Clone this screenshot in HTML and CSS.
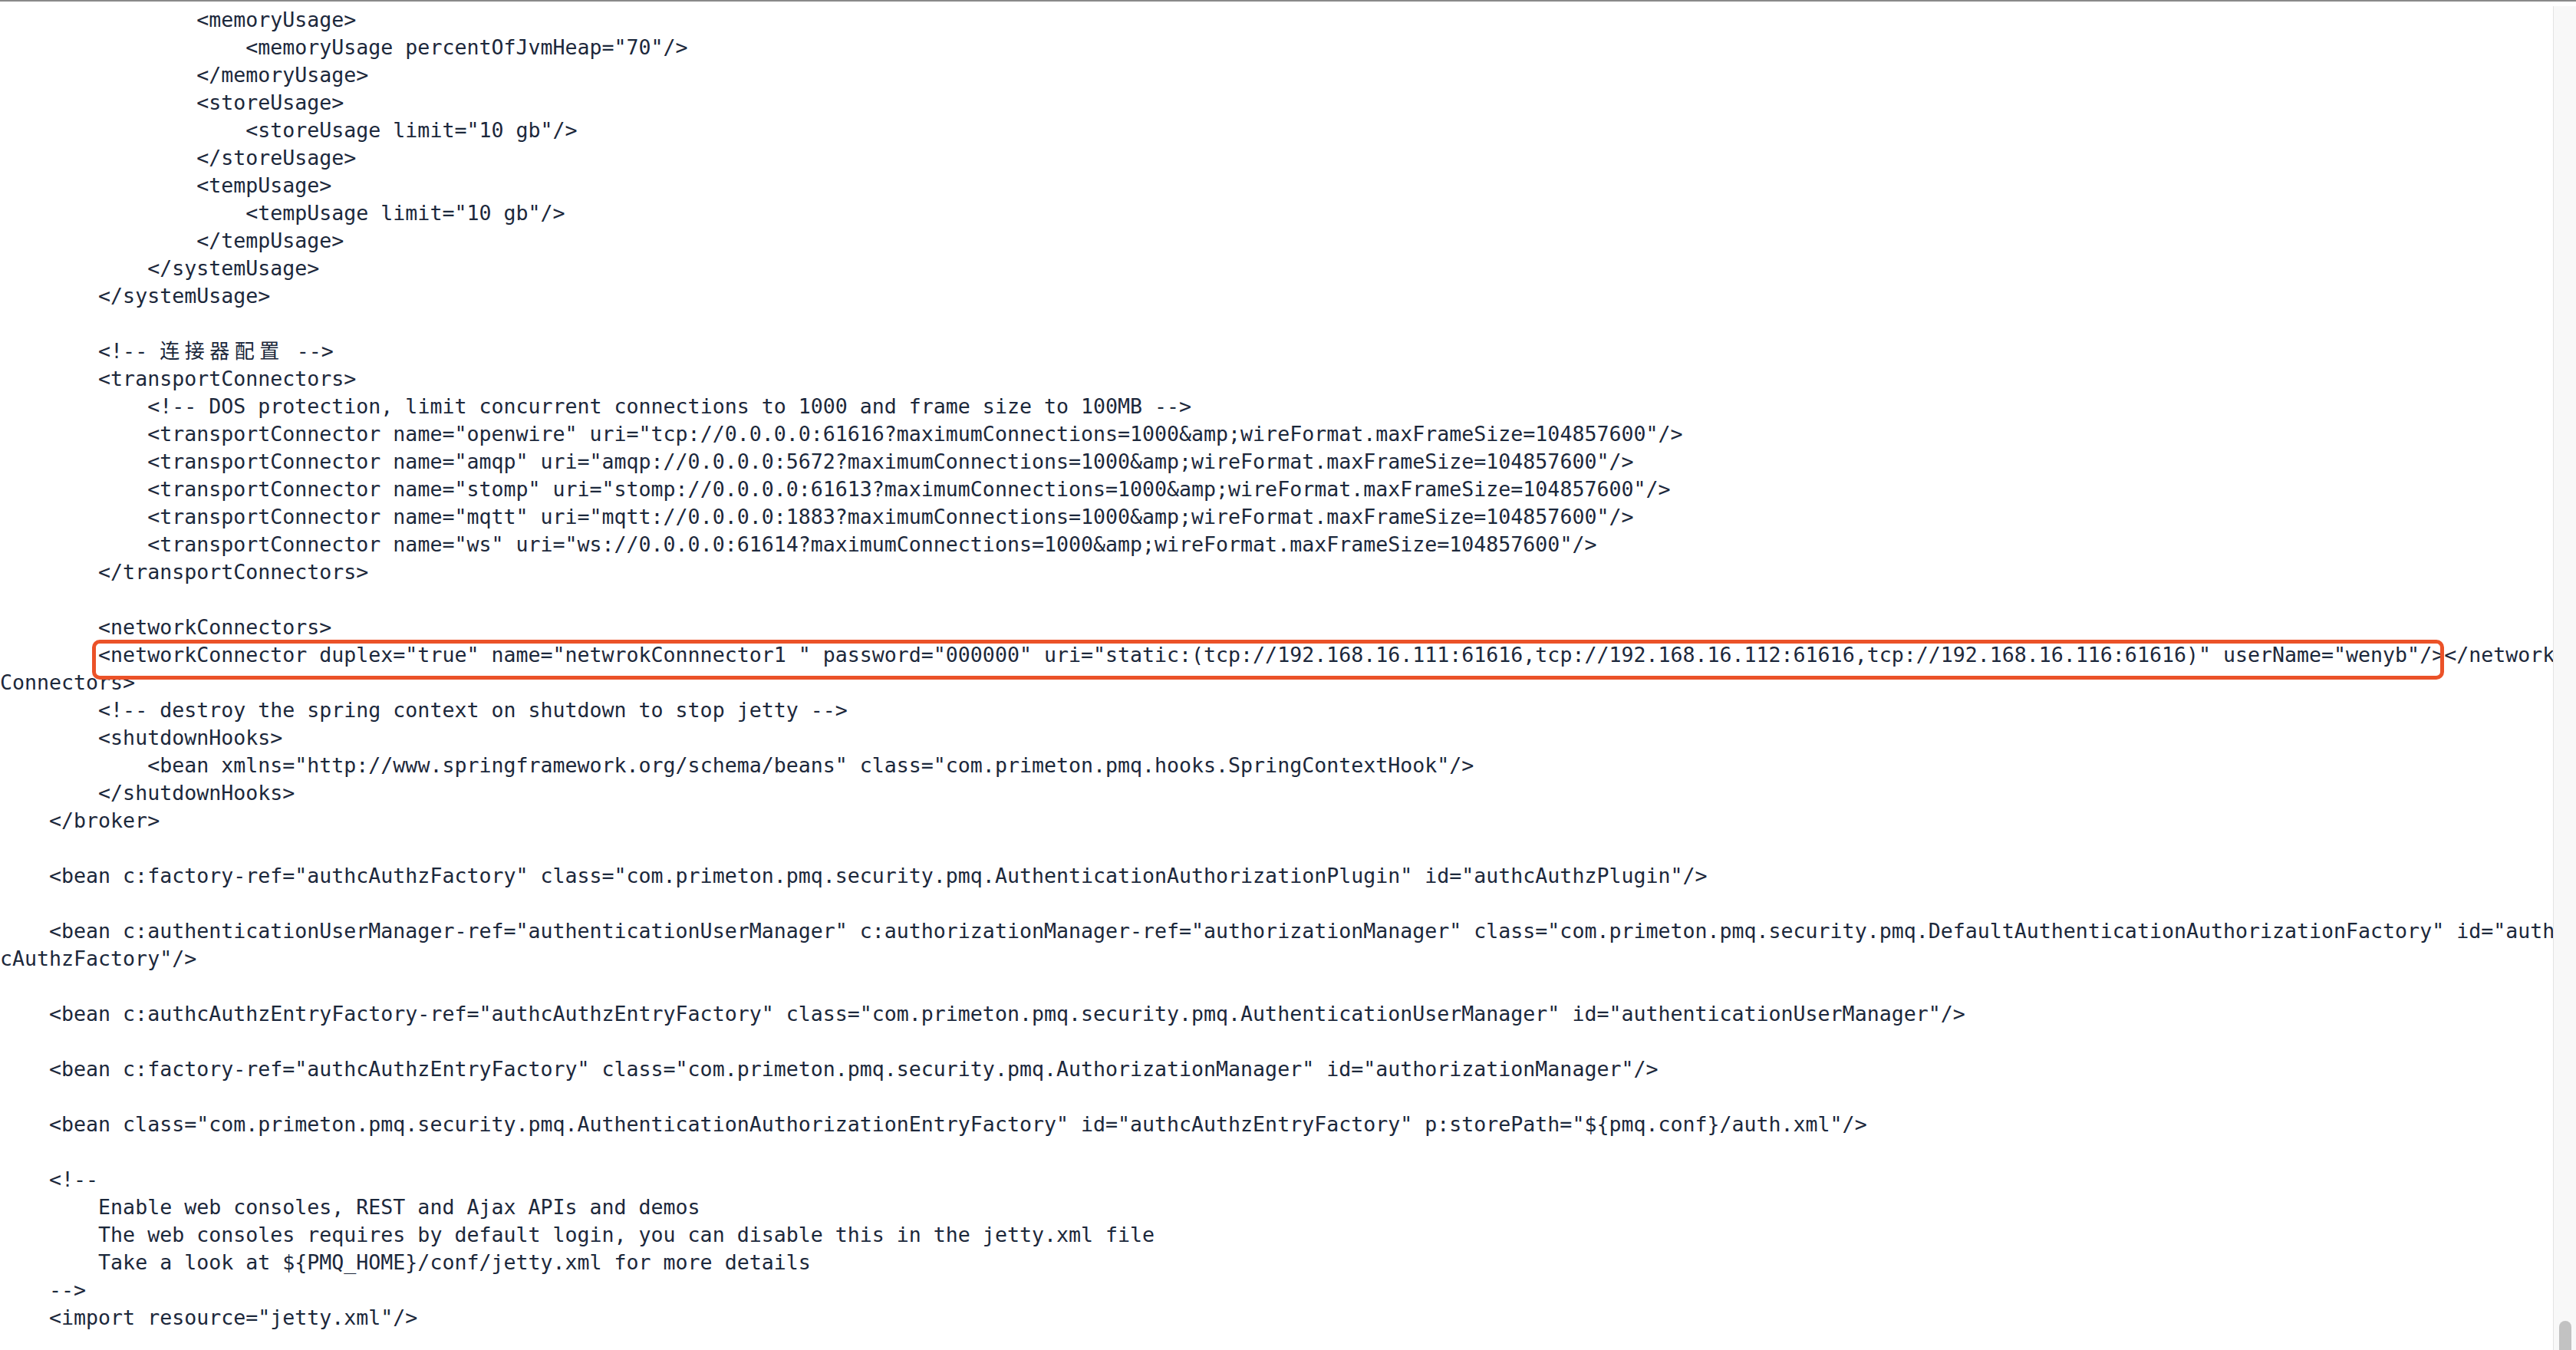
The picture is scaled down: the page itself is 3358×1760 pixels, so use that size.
FILE: index.html
```html
<!DOCTYPE html>
<html lang="zh-CN">
<head>
  <meta charset="UTF-8">
  <meta name="viewport" content="width=device-width, initial-scale=1.0">
  <title>pmq.xml</title>
  <link rel="stylesheet" href="styles.css">
</head>
<body>

  <div class="window">
    <div class="editor">
<pre class="code">                &lt;memoryUsage&gt;
                    &lt;memoryUsage percentOfJvmHeap="70"/&gt;
                &lt;/memoryUsage&gt;
                &lt;storeUsage&gt;
                    &lt;storeUsage limit="10 gb"/&gt;
                &lt;/storeUsage&gt;
                &lt;tempUsage&gt;
                    &lt;tempUsage limit="10 gb"/&gt;
                &lt;/tempUsage&gt;
            &lt;/systemUsage&gt;
        &lt;/systemUsage&gt;

        &lt;!-- <span class="cjk">连接器配置</span> --&gt;
        &lt;transportConnectors&gt;
            &lt;!-- DOS protection, limit concurrent connections to 1000 and frame size to 100MB --&gt;
            &lt;transportConnector name="openwire" uri="tcp://0.0.0.0:61616?maximumConnections=1000&amp;amp;wireFormat.maxFrameSize=104857600"/&gt;
            &lt;transportConnector name="amqp" uri="amqp://0.0.0.0:5672?maximumConnections=1000&amp;amp;wireFormat.maxFrameSize=104857600"/&gt;
            &lt;transportConnector name="stomp" uri="stomp://0.0.0.0:61613?maximumConnections=1000&amp;amp;wireFormat.maxFrameSize=104857600"/&gt;
            &lt;transportConnector name="mqtt" uri="mqtt://0.0.0.0:1883?maximumConnections=1000&amp;amp;wireFormat.maxFrameSize=104857600"/&gt;
            &lt;transportConnector name="ws" uri="ws://0.0.0.0:61614?maximumConnections=1000&amp;amp;wireFormat.maxFrameSize=104857600"/&gt;
        &lt;/transportConnectors&gt;

        &lt;networkConnectors&gt;
        &lt;networkConnector duplex="true" name="netwrokConnnector1 " password="000000" uri="static:(tcp://192.168.16.111:61616,tcp://192.168.16.112:61616,tcp://192.168.16.116:61616)" userName="wenyb"/&gt;&lt;/networkConnectors&gt;
        &lt;!-- destroy the spring context on shutdown to stop jetty --&gt;
        &lt;shutdownHooks&gt;
            &lt;bean xmlns="http://www.springframework.org/schema/beans" class="com.primeton.pmq.hooks.SpringContextHook"/&gt;
        &lt;/shutdownHooks&gt;
    &lt;/broker&gt;

    &lt;bean c:factory-ref="authcAuthzFactory" class="com.primeton.pmq.security.pmq.AuthenticationAuthorizationPlugin" id="authcAuthzPlugin"/&gt;

    &lt;bean c:authenticationUserManager-ref="authenticationUserManager" c:authorizationManager-ref="authorizationManager" class="com.primeton.pmq.security.pmq.DefaultAuthenticationAuthorizationFactory" id="authcAuthzFactory"/&gt;

    &lt;bean c:authcAuthzEntryFactory-ref="authcAuthzEntryFactory" class="com.primeton.pmq.security.pmq.AuthenticationUserManager" id="authenticationUserManager"/&gt;

    &lt;bean c:factory-ref="authcAuthzEntryFactory" class="com.primeton.pmq.security.pmq.AuthorizationManager" id="authorizationManager"/&gt;

    &lt;bean class="com.primeton.pmq.security.pmq.AuthenticationAuthorizationEntryFactory" id="authcAuthzEntryFactory" p:storePath="${pmq.conf}/auth.xml"/&gt;

    &lt;!--
        Enable web consoles, REST and Ajax APIs and demos
        The web consoles requires by default login, you can disable this in the jetty.xml file
        Take a look at ${PMQ_HOME}/conf/jetty.xml for more details
    --&gt;
    &lt;import resource="jetty.xml"/&gt;</pre>

      <!-- Markierung um den networkConnector -->
      <div class="highlight"></div>
    </div>

    <div class="scrollbar">
      <div class="thumb"></div>
    </div>
  </div>

</body>
</html>
```

FILE: styles.css
```css
html, body {
  margin: 0;
  height: 100%;
  background-color: white;
  overflow: hidden;
}

.window {
  display: flex;
  height: 100vh;
  border-top: 2px solid #8a8a8a;
  box-sizing: border-box;
}

.editor {
  position: relative;
  flex: 1;
  overflow: hidden;
}

.code {
  margin: 0;
  padding-top: 6px;
  width: 208.5ch;
  font-family: "DejaVu Sans Mono", "Liberation Mono", monospace;
  font-size: 26.6px;
  line-height: 36px;
  color: #1c283b;
  white-space: pre-wrap;
  word-break: break-all;
}

.cjk {
  font-family: "Noto Sans CJK SC", sans-serif;
  font-size: 26px;
  line-height: 1;
  letter-spacing: 6.5px;
}

.highlight {
  position: absolute;
  left: 120px;
  top: 832px;
  width: 3066px;
  height: 52px;
  border: 5px solid #eb5228;
  border-radius: 10px;
  box-sizing: border-box;
}

.scrollbar {
  width: 30px;
  margin-top: 6px;
  background-color: #f8f8f8;
  border-left: 1px solid #e4e4e4;
  box-sizing: border-box;
  display: flex;
  flex-direction: column;
  justify-content: flex-end;
}

.thumb {
  width: 16px;
  height: 38px;
  margin-left: 7px;
  background-color: #c2c2c2;
  border-radius: 8px 8px 0 0;
}
```
